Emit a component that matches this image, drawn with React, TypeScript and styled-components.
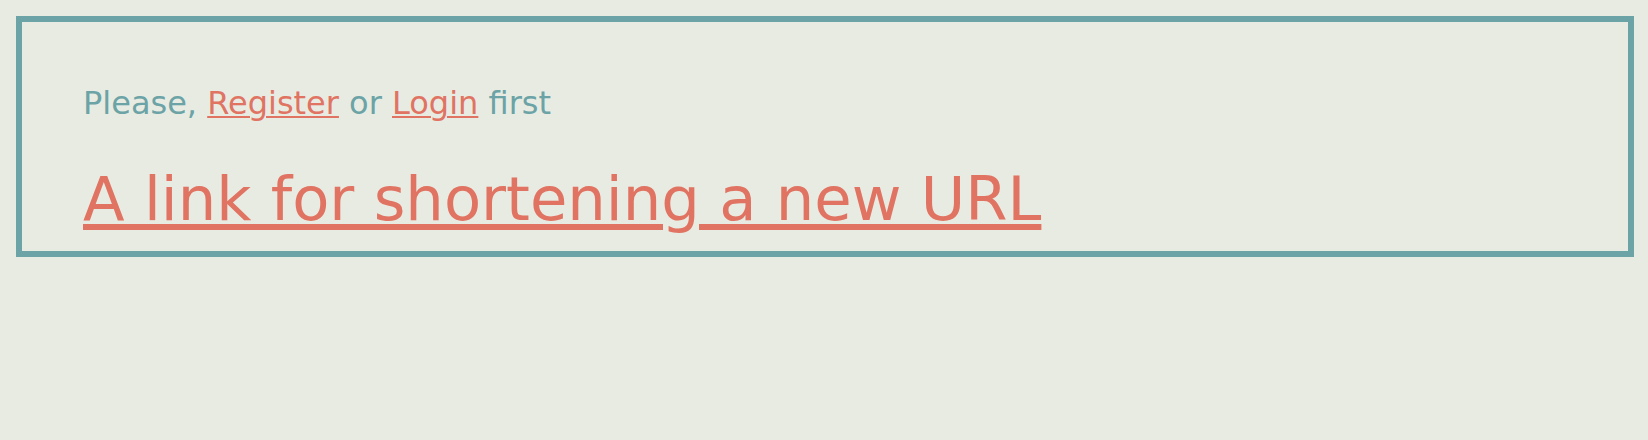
import React from "react";
import styled, { createGlobalStyle } from "styled-components";

const GlobalStyle = createGlobalStyle`
  html, body {
    margin: 0;
    padding: 0;
    background: #e8ebe2;
  }
  body {
    font-family: "DejaVu Sans", Verdana, sans-serif;
  }
`;

const Page = styled.div`
  padding: 16px 14px 0 16px;
`;

const Panel = styled.section`
  border: 6px solid #6ba3a6;
  padding: 62px 24px 17px 61px;
  display: flex;
  flex-direction: column;
  gap: 42px;
`;

const Notice = styled.p`
  margin: 0;
  font-size: 32px;
  line-height: normal;
  color: #6ba3a6;
`;

const InlineLink = styled.a`
  color: #e07362;
  text-decoration: underline;
  text-decoration-thickness: 2px;
  text-underline-offset: 2px;
`;

const BigLink = styled.a`
  align-self: flex-start;
  font-size: 60.8px;
  line-height: normal;
  color: #e07362;
  text-decoration: underline;
  text-decoration-thickness: 6px;
  text-underline-offset: 4px;
`;

export default function App() {
  return (
    <>
      <GlobalStyle />
      <Page>
        <Panel>
          <Notice>
            Please, <InlineLink href="#">Register</InlineLink> or{" "}
            <InlineLink href="#">Login</InlineLink> first
          </Notice>
          <BigLink href="#">A link for shortening a new URL</BigLink>
        </Panel>
      </Page>
    </>
  );
}
